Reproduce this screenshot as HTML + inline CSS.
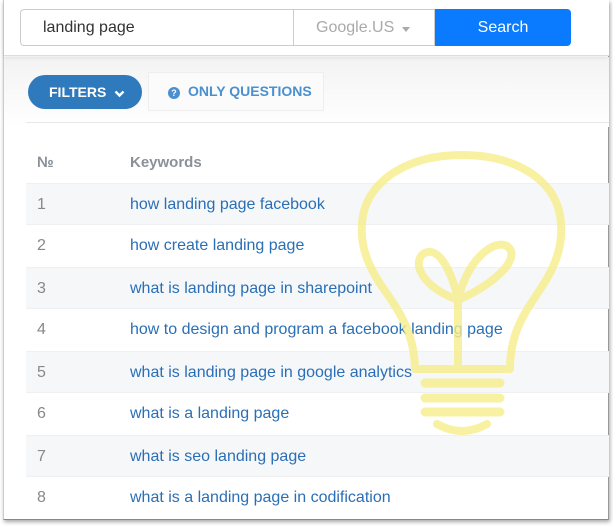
<!DOCTYPE html>
<html><head><style>
*{margin:0;padding:0;box-sizing:border-box}
body{width:613px;height:527px;background:#fff;font-family:"Liberation Sans",Arial,sans-serif;position:relative;overflow:hidden}
.frame{position:absolute;left:3px;top:0;width:606px;height:520px;background:#fff;border-right:1px solid #999;border-bottom:1px solid #888;border-left:1px solid #ccc;box-shadow:1px 2px 4px rgba(0,0,0,.35)}
.top{position:absolute;left:0;top:0;width:605px;height:56px;background:#fff;border-bottom:1px solid #ddd;box-shadow:0 2px 4px rgba(0,0,0,.08)}
.inp{position:absolute;left:16px;top:9px;width:273px;height:37px;border:1px solid #ccc;border-right:none;border-radius:4px 0 0 4px;font-size:16px;color:#333;padding:9px 0 0 22px}
.sel{position:absolute;left:289px;top:9px;width:142px;height:37px;border:1px solid #ccc;font-size:16px;color:#aaa;padding:9px 0 0 22px}
.sel:after{content:"";position:absolute;left:108px;top:17px;border:4px solid transparent;border-top:5px solid #aaa}
.btn{position:absolute;left:431px;top:9px;width:136px;height:37px;background:#0a7bff;border-radius:0 4px 4px 0;color:#fff;font-size:16px;text-align:center;line-height:37px}
.grad{position:absolute;left:0;top:57px;width:605px;height:70px;background:linear-gradient(#f3f3f3,#fff)}
.filt{position:absolute;left:24px;top:75px;width:114px;height:34px;background:#2f7abd;border-radius:17px;color:#fff;font-weight:bold;font-size:14px;line-height:34px;padding-left:21px}
.filt svg{position:static;vertical-align:-1px;margin-left:4px}
.oq{position:absolute;left:144px;top:72px;width:176px;height:39px;background:#fbfbfb;border:1px solid #eee;color:#4a90d0;font-weight:bold;font-size:14px;line-height:37px;padding-left:19px}
.oq i{display:inline-block;width:12px;height:12px;border-radius:50%;background:#4a90d0;color:#fff;font-size:9px;line-height:12px;text-align:center;font-style:normal;margin-right:8px;vertical-align:0}
.hr{position:absolute;left:22px;top:122px;width:583px;height:1px;background:#e8e8e8}
.hd{position:absolute;top:154px;font-size:15px;font-weight:bold;color:#8a9199}
.row{position:absolute;left:22px;width:583px;height:42px;font-size:16px;line-height:41px}
.row.s{background:#f5f7f9;border-top:1px solid #eef0f3;border-bottom:1px solid #eef0f3}
.row .n{position:absolute;left:11px;color:#888}
.row .k{position:absolute;left:104px;color:#2a6fb6}
svg.b{position:absolute;left:0;top:0}
</style></head><body>
<div class="frame">
<div class="grad"></div>
<div class="top">
<div class="inp">landing page</div>
<div class="sel">Google.US</div>
<div class="btn">Search</div>
</div>
<div class="filt">FILTERS <svg width="11" height="8" viewBox="0 0 11 8"><path d="M1.5,1.5 L5.5,5.5 L9.5,1.5" fill="none" stroke="#fff" stroke-width="2.4"/></svg></div>
<div class="oq"><i>?</i>ONLY QUESTIONS</div>
<div class="hr"></div>
<div class="hd" style="left:33px">№</div>
<div class="hd" style="left:126px">Keywords</div>
<div class="row s" style="top:183px"><span class="n">1</span><span class="k">how landing page facebook</span></div>
<div class="row" style="top:225px"><span class="n">2</span><span class="k">how create landing page</span></div>
<div class="row s" style="top:267px"><span class="n">3</span><span class="k">what is landing page in sharepoint</span></div>
<div class="row" style="top:309px"><span class="n">4</span><span class="k">how to design and program a facebook landing page</span></div>
<div class="row s" style="top:351px"><span class="n">5</span><span class="k">what is landing page in google analytics</span></div>
<div class="row" style="top:393px"><span class="n">6</span><span class="k">what is a landing page</span></div>
<div class="row s" style="top:435px"><span class="n">7</span><span class="k">what is seo landing page</span></div>
<div class="row" style="top:477px"><span class="n">8</span><span class="k">what is a landing page in codification</span></div>
</div>
<svg class="b" width="613" height="527" viewBox="0 0 613 527" opacity="0.8">
<g fill="none" stroke="#f7ee8a" stroke-width="8" stroke-linecap="round" stroke-linejoin="round">
<path d="M415,369 C414,330 398,310 381,285 C364,260 359,238 363,215 C371,177 412,155 462,155 C512,155 553,177 560,215 C564,240 558,262 543,285 C527,310 510,330 510,369 Z"/>
<path d="M458,369 V298"/>
<path d="M458,300 C452,272 440,250 428,252 C412,255 414,284 458,300 C492,285 518,262 510,249 C500,235 468,255 458,300"/>
<path d="M425,383 H500 M425,398 H500 M425,412 H500" stroke-width="9"/>
<path d="M437,424 Q462,438 487,424" stroke-width="8"/>
</g>
</svg>
</body></html>
